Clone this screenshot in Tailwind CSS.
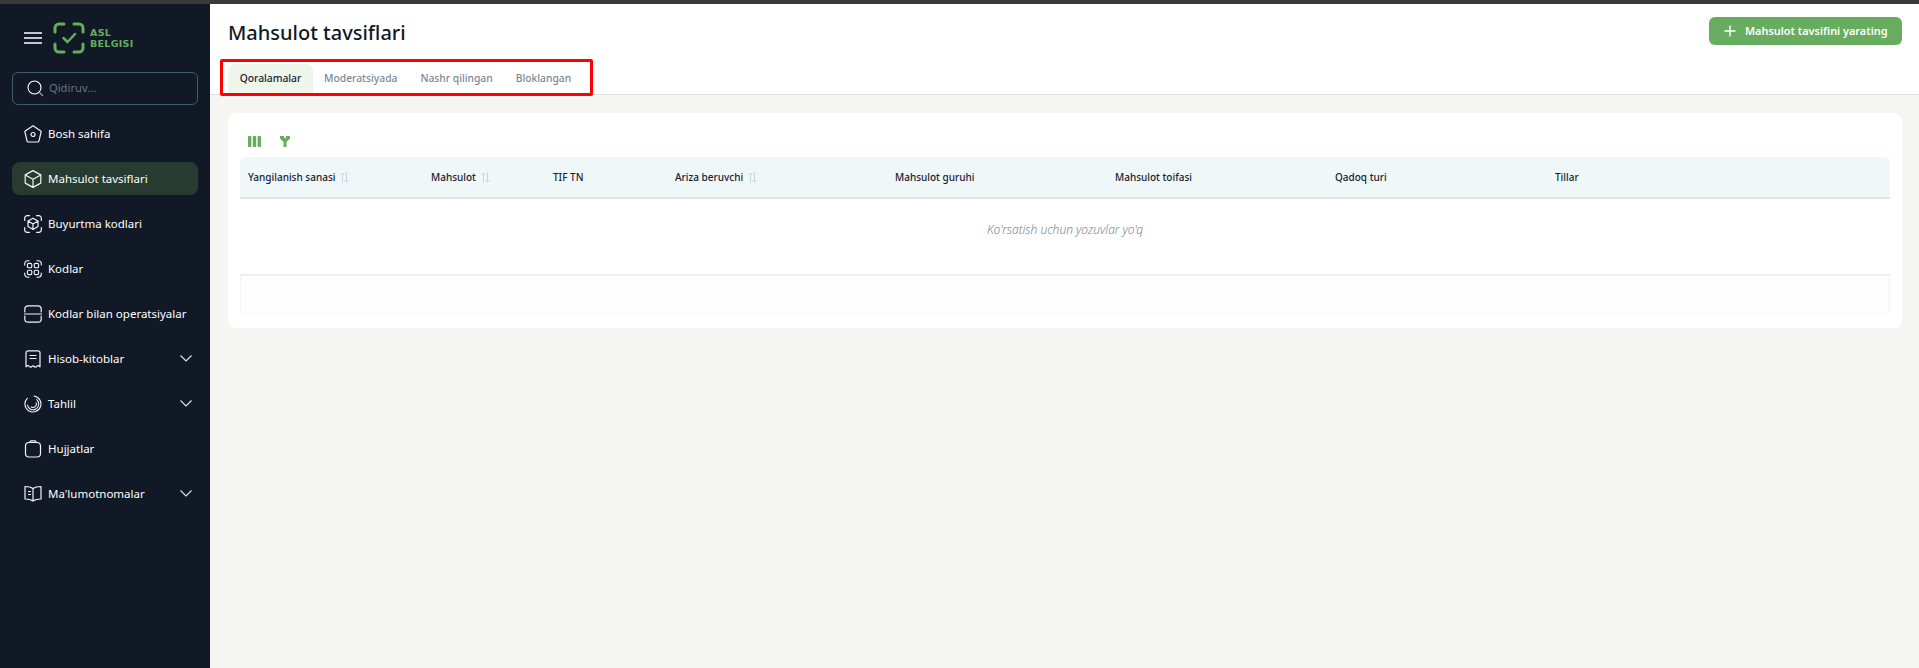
<!DOCTYPE html>
<html lang="en">
<head>
    <meta charset="UTF-8">
    <title>Mahsulot tavsiflari</title>
    <script src="https://cdn.jsdelivr.net/npm/@tailwindcss/browser@4"></script>
</head>
<body class="bg-[#f5f5f3] text-[#1a2230] font-['Noto_Sans',sans-serif] h-[668px] overflow-hidden">
    <div class="h-1 bg-[#3a3a3a]"></div>
    <div class="flex h-[664px]">

        <!-- Sidebar -->
        <aside class="w-[210px] shrink-0 bg-[#111927] text-white px-3">
            <div class="flex items-center h-[68px] pl-3">
                <svg class="w-[18px] h-3" viewBox="0 0 18 12" fill="none" stroke="#fff" stroke-width="1.5"><path d="M0 1h18M0 6h18M0 11h18"/></svg>
                <svg class="ml-[11px] w-8 h-8" viewBox="0 0 32 32" fill="none" stroke="#66ad5b" stroke-width="3" stroke-linecap="round">
                    <path d="M2 10V6a4 4 0 0 1 4-4h5M21 2h5a4 4 0 0 1 4 4v4M30 22v4a4 4 0 0 1-4 4h-5M11 30H6a4 4 0 0 1-4-4v-4"/>
                    <path d="M10.500 16l4 4 7.500-8" stroke-width="2.500"/>
                </svg>
                <div class="ml-[5px] text-[#66ad5b] font-['DejaVu_Sans',sans-serif] font-bold text-[9.500px] leading-[11px] tracking-[0.3px]">ASL<br>BELGISI</div>
            </div>
            <div class="flex items-center h-[33px] border border-[#3d5a6e] rounded-md pl-[14px] gap-[5px]">
                <svg class="w-[17px] h-[17px] shrink-0" viewBox="0 0 17 17" fill="none" stroke="#fff" stroke-width="1.100"><circle cx="7.500" cy="7.500" r="6.500"/><path d="M12.500 12.500l3.500 3.500" stroke="#9ca3af"/></svg>
                <span class="text-[11.200px] text-[#6b7280]">Qidiruv...</span>
            </div>
            <nav class="mt-[12px] flex flex-col gap-3 text-[11.500px]">
                <a class="flex items-center h-[33px] pl-3 pr-[6px] gap-[6px] rounded-lg">
                    <svg class="w-[18px] h-[18px] shrink-0" viewBox="0 0 18 18" fill="none" stroke="#f3f4f6" stroke-width="1.200" stroke-linejoin="round"><path d="M9 .8l7.800 5.200a.8.8 0 0 1 .3.900L15 15.800a1.500 1.500 0 0 1-1.400 1.200H4.400A1.500 1.500 0 0 1 3 15.800L.9 6.900a.8.8 0 0 1 .3-.900z"/><circle cx="9" cy="9.500" r="2"/></svg>
                    <span>Bosh sahifa</span>
                </a>
                <a class="flex items-center h-[33px] pl-3 pr-[6px] gap-[6px] rounded-lg bg-[#283b30]">
                    <svg class="w-[18px] h-[18px] shrink-0" viewBox="0 0 18 18" fill="none" stroke="#f3f4f6" stroke-width="1.200" stroke-linejoin="round"><path d="M9 .6l7.800 4.300v8.200L9 17.400l-7.800-4.300V4.900zM1.200 4.900L9 9.300l7.800-4.400M9 9.300v8.100"/></svg>
                    <span>Mahsulot tavsiflari</span>
                </a>
                <a class="flex items-center h-[33px] pl-3 pr-[6px] gap-[6px] rounded-lg">
                    <svg class="w-[18px] h-[18px] shrink-0" viewBox="0 0 18 18" fill="none" stroke="#f3f4f6" stroke-width="1.200" stroke-linejoin="round" stroke-linecap="round"><path d="M.7 5.500V3.200A2.500 2.500 0 0 1 3.200.7h2.300M12.500.7h2.300a2.500 2.500 0 0 1 2.500 2.500v2.300M17.300 12.500v2.300a2.500 2.500 0 0 1-2.500 2.500h-2.300M5.500 17.300H3.200a2.500 2.500 0 0 1-2.500-2.500v-2.300"/><path d="M9 3.200l5 2.800v5.600l-5 2.800-5-2.800V6zM4 6l5 2.900L14 6M9 8.900v5.500"/></svg>
                    <span>Buyurtma kodlari</span>
                </a>
                <a class="flex items-center h-[33px] pl-3 pr-[6px] gap-[6px] rounded-lg">
                    <svg class="w-[18px] h-[18px] shrink-0" viewBox="0 0 18 18" fill="none" stroke="#f3f4f6" stroke-width="1.100" stroke-linecap="round"><path d="M.7 5V3.700a3 3 0 0 1 3-3H5M13 .7h1.300a3 3 0 0 1 3 3V5M17.300 13v1.300a3 3 0 0 1-3 3H13M5 17.300H3.700a3 3 0 0 1-3-3V13"/><rect x="3.400" y="3.400" width="4.400" height="4.400" rx="1.300"/><rect x="10.200" y="3.400" width="4.400" height="4.400" rx="1.300"/><rect x="3.400" y="10.200" width="4.400" height="4.400" rx="1.300"/><rect x="10.200" y="10.200" width="4.400" height="4.400" rx="1.300"/></svg>
                    <span>Kodlar</span>
                </a>
                <a class="flex items-center h-[33px] pl-3 pr-[6px] gap-[6px] rounded-lg">
                    <svg class="w-[18px] h-[18px] shrink-0" viewBox="0 0 18 18" fill="none" stroke="#f3f4f6" stroke-width="1.200" stroke-linecap="round"><path d="M.8 7V4a3.200 3.200 0 0 1 3.200-3.200h10A3.200 3.200 0 0 1 17.200 4v3M.8 11v3A3.200 3.200 0 0 0 4 17.200h10a3.200 3.200 0 0 0 3.200-3.200v-3M.5 9h17"/></svg>
                    <span class="whitespace-nowrap">Kodlar bilan operatsiyalar</span>
                </a>
                <a class="flex items-center h-[33px] pl-3 pr-[6px] gap-[6px] rounded-lg">
                    <svg class="w-[18px] h-[18px] shrink-0" viewBox="0 0 18 18" fill="none" stroke="#f3f4f6" stroke-width="1.200" stroke-linejoin="round" stroke-linecap="round"><path d="M2 16.800V2.800A2 2 0 0 1 4 .8h10a2 2 0 0 1 2 2v14l-2-1.200c-.8-.4-1.500 1.600-2.500 1.600S10 15.800 9 15.800s-1.500 1.400-2.500 1.400S4.800 15.200 4 15.600z"/><path d="M6 5.500h6M6 8.500h6"/></svg>
                    <span>Hisob-kitoblar</span>
                    <svg class="ml-auto w-3 h-[7px]" viewBox="0 0 12 7" fill="none" stroke="#e5e7eb" stroke-width="1.100"><path d="M.5.5L6 6l5.500-5.500"/></svg>
                </a>
                <a class="flex items-center h-[33px] pl-3 pr-[6px] gap-[6px] rounded-lg">
                    <svg class="w-[18px] h-[18px] shrink-0" viewBox="0 0 18 18" fill="none" stroke="#f3f4f6" stroke-width="1.100" stroke-linecap="round"><path d="M10 1.060A8 8 0 1 1 3.300 3.300"/><path d="M12.660 4.630A5.700 5.700 0 1 1 3.400 10"/><path d="M12.200 7.840A3.400 3.400 0 0 1 7.300 11.940"/></svg>
                    <span>Tahlil</span>
                    <svg class="ml-auto w-3 h-[7px]" viewBox="0 0 12 7" fill="none" stroke="#e5e7eb" stroke-width="1.100"><path d="M.5.5L6 6l5.500-5.500"/></svg>
                </a>
                <a class="flex items-center h-[33px] pl-3 pr-[6px] gap-[6px] rounded-lg">
                    <svg class="w-[18px] h-[18px] shrink-0" viewBox="0 0 18 18" fill="none" stroke="#f3f4f6" stroke-width="1.200" stroke-linejoin="round"><path d="M6 2.500V1.800a1 1 0 0 1 1-1h4a1 1 0 0 1 1 1v.7M5 2.500h8a3.500 3.500 0 0 1 3.500 3.500v7.500a3.500 3.500 0 0 1-3.500 3.500H5a3.500 3.500 0 0 1-3.500-3.500V6A3.500 3.500 0 0 1 5 2.500z"/></svg>
                    <span>Hujjatlar</span>
                </a>
                <a class="flex items-center h-[33px] pl-3 pr-[6px] gap-[6px] rounded-lg">
                    <svg class="w-[18px] h-[18px] shrink-0" viewBox="0 0 18 18" fill="none" stroke="#f3f4f6" stroke-width="1.200" stroke-linejoin="round" stroke-linecap="round"><path d="M9 3.500C7 2 4 1.500 1 1.500v12.500c3 0 6 .5 8 2 2-1.500 5-2 8-2V1.500c-3 0-6 .5-8 2zM9 3.500V16M4.500 6.500h2M4.500 9.500h2"/></svg>
                    <span>Ma'lumotnomalar</span>
                    <svg class="ml-auto w-3 h-[7px]" viewBox="0 0 12 7" fill="none" stroke="#e5e7eb" stroke-width="1.100"><path d="M.5.5L6 6l5.500-5.500"/></svg>
                </a>
            </nav>
        </aside>

        <main class="flex-1 min-w-0 relative">
            <!-- Header -->
            <header class="bg-white h-[91px] border-b border-[#e0e0e0] px-[18px] relative">
                <div class="flex items-start justify-between pt-[13px] h-[43px]">
                    <h1 class="text-[20px] leading-[30px] mt-[1px] font-medium text-[#111827]">Mahsulot tavsiflari</h1>
                    <button class="bg-[#68ad5f] text-white rounded-md h-7 w-[193px] flex items-center pl-[15px] gap-[9px] text-[10.900px] font-semibold -mr-[1px]">
                        <svg class="w-3 h-3" viewBox="0 0 12 12" fill="none" stroke="#fff" stroke-width="1.400"><path d="M6 .5v11M.5 6h11"/></svg>
                        Mahsulot tavsifini yarating
                    </button>
                </div>
                <!-- Tabs -->
                <div class="flex mt-[17px] h-[30px] text-[10.300px] font-medium text-[#7b8794]">
                    <span class="flex items-center justify-center w-[85px] bg-[#eef5ea] rounded-t-lg text-[#1a2230]">Qoralamalar</span>
                    <span class="flex items-center ml-[11px]">Moderatsiyada</span>
                    <span class="flex items-center ml-[23px]">Nashr qilingan</span>
                    <span class="flex items-center ml-[23px]">Bloklangan</span>
                </div>
                <!-- Red highlight over the tabs -->
                <div class="absolute left-[10px] top-[55px] w-[373px] h-[37px] border-[3px] border-[#ff0000] rounded-[2px] z-10"></div>
            </header>

            <!-- Table card -->
            <section class="mt-[18px] ml-[18px] w-[1674px] h-[215px] bg-white rounded-lg px-3 pt-4">
                <div class="flex items-center gap-[19px] h-6 pl-2">
                    <svg class="w-[13px] h-[11px]" viewBox="0 0 13 11" fill="#68ad5f"><rect width="3.400" height="11" rx=".8"/><rect x="4.800" width="3.400" height="11" rx=".8"/><rect x="9.600" width="3.400" height="11" rx=".8"/></svg>
                    <svg class="w-[10px] h-[11px]" viewBox="0 0 10 11" fill="#68ad5f"><path d="M0 0h4v2h2V0h4v2.500L6.500 6v5h-3V6L0 2.500z"/></svg>
                </div>
                <div class="mt-1 grid grid-cols-[183px_122px_122px_220px_220px_220px_220px_1fr] items-center h-[42px] bg-[#eff7f9] border-b-2 border-[#dfe4e8] rounded-t-md text-[10px] font-medium">
                    <div class="pl-2 flex items-center gap-[5px]">Yangilanish sanasi
                        <svg class="w-[9px] h-[11px]" viewBox="0 0 9 11" fill="none" stroke="#ccd5da" stroke-width="1"><path d="M2.500 11V1M.5 3l2-2 2 2M6.500 0v10M4.500 8l2 2 2-2"/></svg>
                    </div>
                    <div class="pl-2 flex items-center gap-[5px]">Mahsulot
                        <svg class="w-[9px] h-[11px]" viewBox="0 0 9 11" fill="none" stroke="#ccd5da" stroke-width="1"><path d="M2.500 11V1M.5 3l2-2 2 2M6.500 0v10M4.500 8l2 2 2-2"/></svg>
                    </div>
                    <div class="pl-2">TIF TN</div>
                    <div class="pl-2 flex items-center gap-[5px]">Ariza beruvchi
                        <svg class="w-[9px] h-[11px]" viewBox="0 0 9 11" fill="none" stroke="#ccd5da" stroke-width="1"><path d="M2.500 11V1M.5 3l2-2 2 2M6.500 0v10M4.500 8l2 2 2-2"/></svg>
                    </div>
                    <div class="pl-2">Mahsulot guruhi</div>
                    <div class="pl-2">Mahsulot toifasi</div>
                    <div class="pl-2">Qadoq turi</div>
                    <div class="pl-2">Tillar</div>
                </div>
                <div class="h-[75px] flex items-center justify-center text-[12px] italic font-light text-[#7b8794] pb-[13px]">Ko'rsatish uchun yozuvlar yo'q</div>
                <div class="h-[41px] bg-[#fdfdfd] border-t-2 border-x border-b border-t-[#efefef] border-x-[#f3f3f3] border-b-[#fbfbfb] rounded-b-md"></div>
            </section>
        </main>
    </div>
</body>
</html>
